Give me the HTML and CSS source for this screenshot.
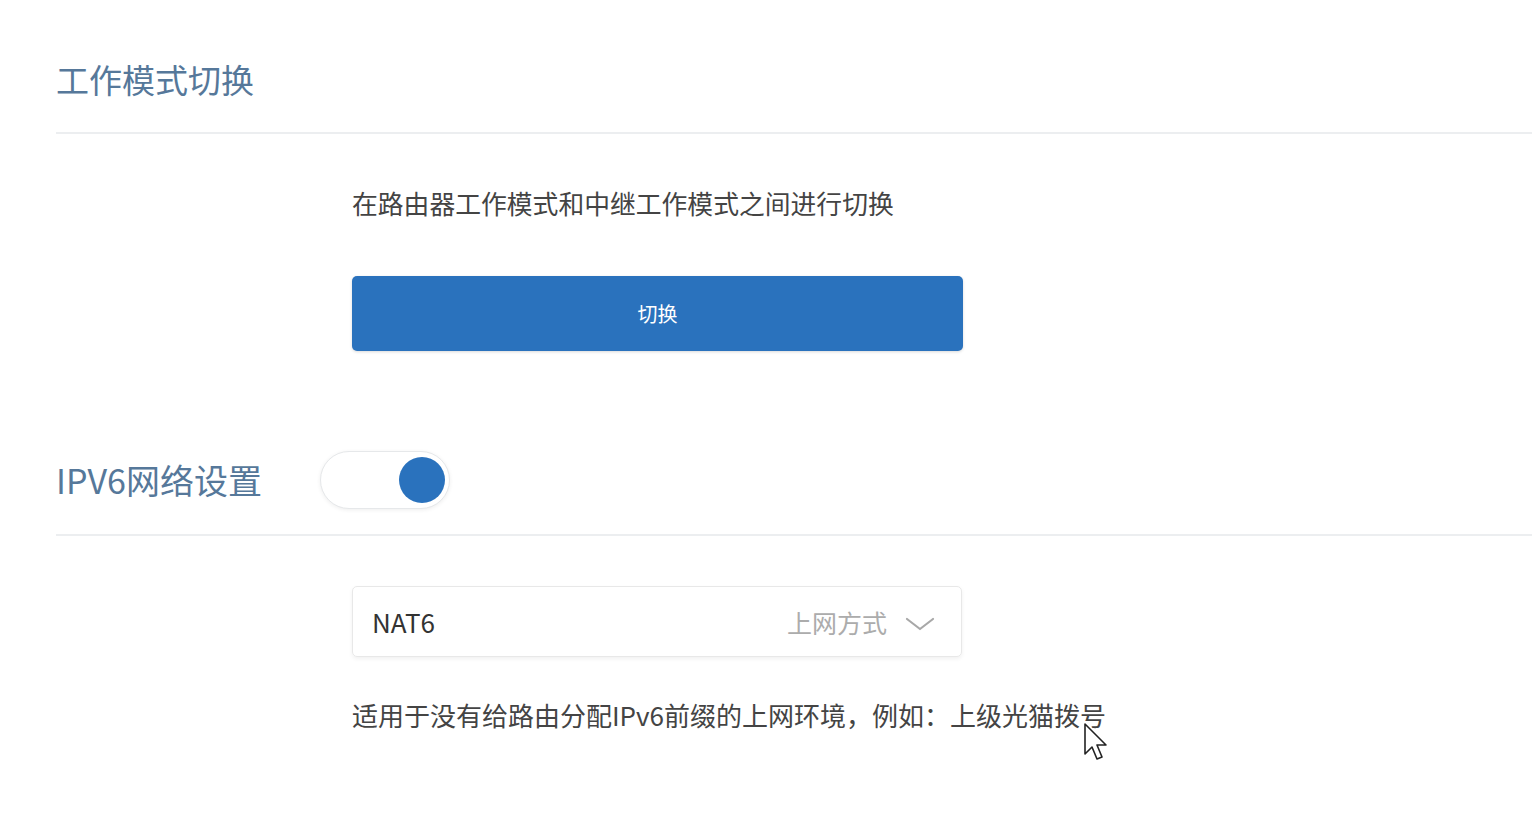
FILE: index.html
```html
<!DOCTYPE html>
<html lang="zh-CN">
<head>
<meta charset="utf-8">
<title>工作模式切换</title>
<link rel="stylesheet" href="styles.css">
</head>
<body>
<div class="page">
  <section class="section">
    <div class="section-head">
      <h2 class="section-title">工作模式切换</h2>
    </div>
    <div class="section-body">
      <p class="desc">在路由器工作模式和中继工作模式之间进行切换</p>
      <button class="btn-primary">切换</button>
    </div>
  </section>

  <section class="section section-ipv6">
    <div class="section-head">
      <h2 class="section-title">IPV6网络设置</h2>
      <div class="toggle"><span class="knob"></span></div>
    </div>
    <div class="section-body">
      <div class="select">
        <span class="select-value">NAT6</span>
        <span class="select-right">
          <span class="select-label">上网方式</span>
          <svg class="chevron" width="30" height="16" viewBox="0 0 30 16"><path d="M2 3 L15 13 L28 3" fill="none" stroke="#a8a8a8" stroke-width="2.2" stroke-linecap="round" stroke-linejoin="round"/></svg>
        </span>
      </div>
      <p class="help">适用于没有给路由分配IPv6前缀的上网环境，例如：上级光猫拨号</p>
    </div>
  </section>

  <svg class="cursor" width="26" height="40" viewBox="0 0 26 40"><path d="M2 1 L2 31 L9 24 L14 36 L19 34 L14 22 L23 22 Z" fill="#fff" stroke="#222" stroke-width="1.6" stroke-linejoin="round"/></svg>
</div>
</body>
</html>
```

FILE: styles.css
```css
html, body {
  margin: 0;
  padding: 0;
  background: #fff;
}
body {
  font-family: "Noto Sans CJK SC", "Noto Sans", sans-serif;
  color: #444;
}
.page {
  position: relative;
  padding-left: 56px;
  min-height: 814px;
  box-sizing: border-box;
}
.section-head {
  display: flex;
  align-items: center;
  gap: 58px;
  height: 58px;
  padding-top: 50px;
  padding-bottom: 24px;
  border-bottom: 2px solid #eceef0;
}
.section-title {
  margin: 0;
  font-size: 33px;
  font-weight: 400;
  line-height: 58px;
  color: #56789a;
}
.section-body {
  padding-left: 296px;
  display: flex;
  flex-direction: column;
  align-items: flex-start;
}
.desc {
  margin: 49px 0 0;
  font-size: 25.8px;
  line-height: 40px;
  color: #444;
}
.btn-primary {
  margin-top: 53px;
  width: 611px;
  height: 75px;
  border: none;
  border-radius: 5px;
  background: #2a72bd;
  color: #fff;
  font-family: inherit;
  font-size: 20px;
  box-shadow: 0 1px 3px rgba(0,0,0,0.15);
}
.section-ipv6 .section-head {
  padding-top: 100px;
  padding-bottom: 25px;
}
.section-ipv6 .section-title {
  font-size: 34px;
}
.toggle {
  width: 124px;
  height: 56px;
  border: 1px solid #e6e8ea;
  border-radius: 29px;
  background: #fff;
  box-shadow: 0 1px 4px rgba(0,0,0,0.07);
  display: flex;
  align-items: center;
  justify-content: flex-end;
  padding-right: 4px;
  box-sizing: content-box;
}
.knob {
  width: 46px;
  height: 46px;
  border-radius: 50%;
  background: #2a72bd;
}
.select {
  margin-top: 50px;
  width: 563px;
  height: 69px;
  border: 1px solid #e8e8e8;
  border-radius: 5px;
  box-shadow: 0 2px 4px rgba(0,0,0,0.06);
  display: flex;
  align-items: center;
  justify-content: space-between;
  padding: 0 26px 0 19px;
  box-sizing: content-box;
}
.select-value {
  font-size: 26px;
  color: #333;
}
.select-right {
  display: flex;
  align-items: center;
  gap: 18px;
}
.select-label {
  font-size: 25px;
  color: #acacac;
}
.chevron {
  display: block;
  margin-top: 4px;
}
.help {
  margin: 38px 0 0;
  font-size: 26px;
  line-height: 40px;
  color: #444;
}
.cursor {
  position: absolute;
  left: 1083px;
  top: 723px;
}
```
